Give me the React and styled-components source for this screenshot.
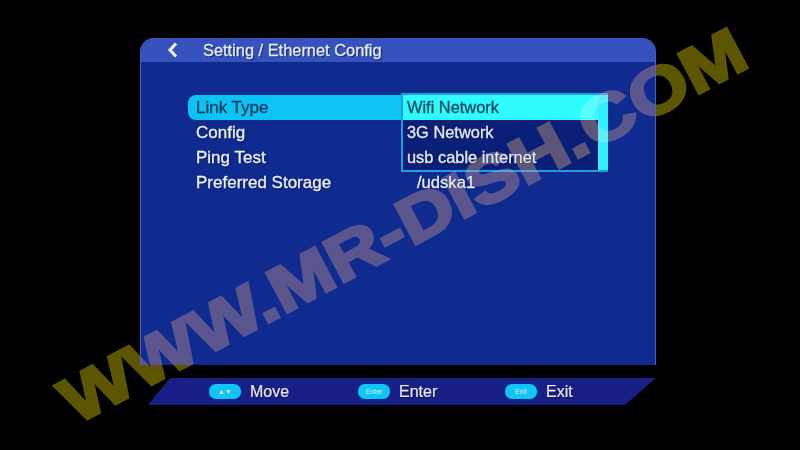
import React from 'react'
import styled, { createGlobalStyle } from 'styled-components'

const GlobalStyle = createGlobalStyle`
    html, body {
        margin: 0;
        padding: 0;
        background: #000;
    }
    body {
        font-family: "Liberation Sans", Arial, sans-serif;
    }
`

const Screen = styled.div`
    position: relative;
    width: 800px;
    height: 450px;
    overflow: hidden;
    background: #000;
    display: flex;
    flex-direction: column;
    padding-top: 38px;
    box-sizing: border-box;
    filter: blur(0.5px);
`

const Panel = styled.div`
    width: 516px;
    height: 327px;
    margin-left: 140px;
    box-sizing: border-box;
    background: #0f2b8f;
    border-left: 1px solid #4a5fc0;
    border-right: 1px solid #4a5fc0;
    border-radius: 14px 14px 0 0;
    overflow: hidden;
    flex-shrink: 0;
`

const Header = styled.div`
    height: 24px;
    background: #3552bd;
    display: flex;
    align-items: center;
    color: #e8ecf8;
    font-size: 16.4px;
    padding-left: 25px;
    -webkit-text-stroke: 0.3px #e8ecf8;
    text-shadow: 1px 1px 1px #0b1c66;
`

const Title = styled.span`
    margin-left: 24px;
`

const Rows = styled.div`
    position: relative;
    margin: 33px 0 0 47px;
    width: 420px;
`

const Row = styled.div`
    display: flex;
    align-items: center;
    height: 25px;
    width: 214px;
    padding-left: 8px;
    box-sizing: border-box;
    font-size: 17px;
    white-space: nowrap;
    color: ${({ $active }) => ($active ? '#063a5c' : '#eef0fa')};
    -webkit-text-stroke: 0.3px ${({ $active }) => ($active ? '#063a5c' : '#eef0fa')};
    background: ${({ $active }) => ($active ? '#0cc4f4' : 'transparent')};
    border-radius: 8px 0 0 8px;
    text-shadow: ${({ $active }) => ($active ? 'none' : '1px 1px 2px #0a1a60')};
`

const RowValue = styled.span`
    position: absolute;
    left: 229px;
    font-size: 16.6px;
    color: #eef0fa;
`

const Dropdown = styled.div`
    position: absolute;
    top: -2px;
    left: 213px;
    width: 207px;
    height: 79px;
    box-sizing: border-box;
    border: 2px solid #1f9ee0;
    border-right: none;
    background: #0a2078;
    display: flex;
`

const Options = styled.div`
    flex: 1;
`

const Option = styled.div`
    height: 25px;
    padding-left: 4px;
    display: flex;
    align-items: center;
    font-size: 16.4px;
    color: ${({ $active }) => ($active ? '#064a5e' : '#e6eaf6')};
    -webkit-text-stroke: 0.3px ${({ $active }) => ($active ? '#064a5e' : '#e6eaf6')};
    background: ${({ $active }) => ($active ? '#2dfbfd' : 'transparent')};
    text-shadow: ${({ $active }) => ($active ? 'none' : '1px 1px 1px #071654')};
`

const Scrollbar = styled.div`
    width: 10px;
    background: #2af0fa;
    border-left: 1px solid #7fd8ee;
    box-sizing: border-box;
`

const Footer = styled.div`
    width: 508px;
    height: 27px;
    margin: 13px 0 0 148px;
    background: #1a1f85;
    clip-path: polygon(22px 0, 100% 0, 477px 100%, 0 100%);
    display: flex;
    align-items: center;
    padding-left: 60px;
    box-sizing: border-box;
    flex-shrink: 0;
`

const Hint = styled.div`
    display: flex;
    align-items: center;
    width: ${({ $width }) => $width}px;
    color: #e8e8f6;
    font-size: 16px;
    -webkit-text-stroke: 0.2px #e8e8f6;
    text-shadow: 1px 1px 1px #0a0f50;
`

const Pill = styled.span`
    width: 32px;
    height: 15px;
    border-radius: 9px;
    background: #12c4f2;
    border: 2px solid #0a2a90;
    color: #d0f4fd;
    font-size: 7px;
    -webkit-text-stroke: 0;
    text-shadow: none;
    display: flex;
    align-items: center;
    justify-content: center;
    margin: 0 7px 0 -1px;
    flex-shrink: 0;
`

const Watermark = styled.div`
    position: absolute;
    left: 80px;
    top: 188px;
    font-size: 65px;
    font-weight: bold;
    white-space: nowrap;
    color: #5c5600;
    -webkit-text-stroke: 3px #5c5600;
    mix-blend-mode: lighten;
    transform: rotate(-28deg) scaleX(1.185);
    pointer-events: none;
`

const BackIcon = () => (
    <svg width="13" height="16" viewBox="0 0 13 16">
        <path d="M10 1.5 L4 8 L10 14.5" fill="none" stroke="#f2f4fc" strokeWidth="3" />
    </svg>
)

const hints = [
    { key: '▲▼', label: 'Move', width: 149 },
    { key: 'Enter', label: 'Enter', width: 147 },
    { key: 'Exit', label: 'Exit', width: 100 },
]

const options = ['Wifi Network', '3G Network', 'usb cable internet']

const App = () => {
    return (
        <Screen>
            <GlobalStyle />
            <Panel>
                <Header>
                    <BackIcon />
                    <Title>Setting / Ethernet Config</Title>
                </Header>
                <Rows>
                    <Row $active>Link Type</Row>
                    <Row>Config</Row>
                    <Row>Ping Test</Row>
                    <Row>
                        Preferred Storage
                        <RowValue>/udska1</RowValue>
                    </Row>
                    <Dropdown>
                        <Options>
                            {options.map((o, i) => (
                                <Option key={o} $active={i === 0}>{o}</Option>
                            ))}
                        </Options>
                        <Scrollbar />
                    </Dropdown>
                </Rows>
            </Panel>
            <Footer>
                {hints.map(h => (
                    <Hint key={h.label} $width={h.width}>
                        <Pill>{h.key}</Pill>
                        {h.label}
                    </Hint>
                ))}
            </Footer>
            <Watermark>WWW.MR-DISH.COM</Watermark>
        </Screen>
    )
}

export default App
